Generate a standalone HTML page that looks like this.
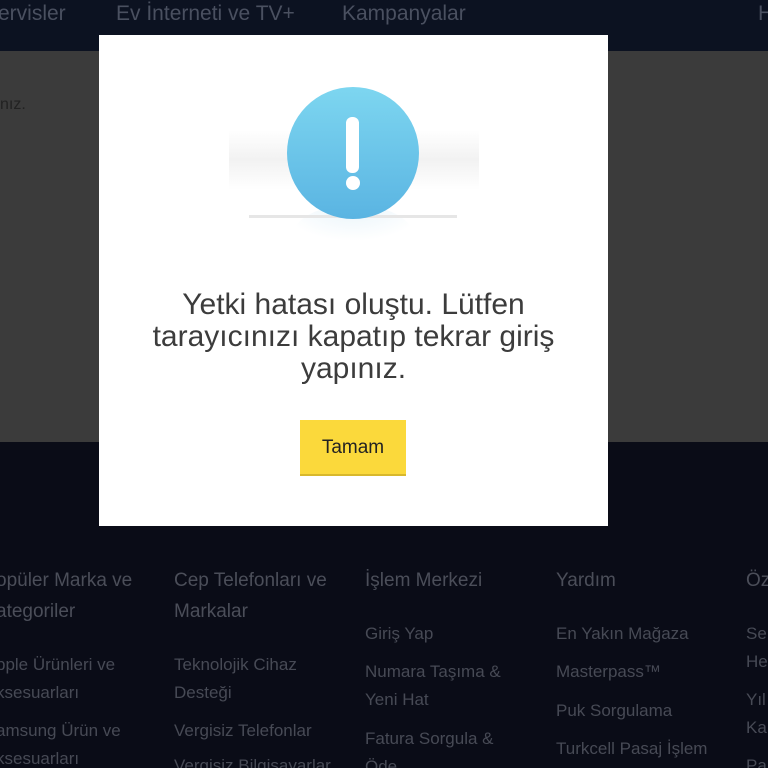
<!DOCTYPE html>
<html style="width:768px;height:768px;overflow:hidden"><head><style>
*{margin:0;padding:0;box-sizing:border-box}
body{width:768px;height:768px;overflow:hidden;position:relative;background:#0a0c17;font-family:"Liberation Sans",sans-serif}
.nav{position:absolute;left:0;top:0;width:768px;height:51px;background:#0c1221;color:#4a5060;font-size:21px}
.nav span{position:absolute;top:2px}
.gray{position:absolute;left:0;top:51px;width:768px;height:391px;background:#3b3b3b}
.foot{position:absolute;color:#474a55;font-size:17px;line-height:28px;white-space:nowrap}
.foot.h{font-size:19px;line-height:31px;color:#4b4e59}
.modal{position:absolute;left:99px;top:35px;width:509px;height:491px;background:#fff}
.msg{position:absolute;left:0;top:254px;width:509px;text-align:center;font-size:30px;line-height:32px;color:#3c3c3c}
.btn{position:absolute;left:201px;top:385px;width:106px;height:56px;background:#fbd93b;border-bottom:2px solid #d8b82c;font-size:19px;color:#222;text-align:center;line-height:56px}
</style></head><body>
<div class="nav"><span style="left:-2px">ervisler</span><span style="left:116px">Ev İnterneti ve TV+</span><span style="left:342px">Kampanyalar</span><span style="left:758px">H</span></div>
<div class="gray"><span style="position:absolute;left:0;top:45px;color:#222;font-size:16px">nız.</span></div>
<div class="foot h" style="left:-4px;top:565px">opüler Marka ve<br>ategoriler</div>
<div class="foot h" style="left:174px;top:565px">Cep Telefonları ve<br>Markalar</div>
<div class="foot h" style="left:365px;top:565px">İşlem Merkezi</div>
<div class="foot h" style="left:556px;top:565px">Yardım</div>
<div class="foot h" style="left:746px;top:565px">Öz</div>
<div class="foot" style="left:-4px;top:651px">pple Ürünleri ve<br>ksesuarları</div>
<div class="foot" style="left:-4px;top:717px">amsung Ürün ve<br>ksesuarları</div>
<div class="foot" style="left:174px;top:651px">Teknolojik Cihaz<br>Desteği</div>
<div class="foot" style="left:174px;top:717px">Vergisiz Telefonlar</div>
<div class="foot" style="left:174px;top:752px">Vergisiz Bilgisayarlar</div>
<div class="foot" style="left:365px;top:620px">Giriş Yap</div>
<div class="foot" style="left:365px;top:658px">Numara Taşıma &amp;<br>Yeni Hat</div>
<div class="foot" style="left:365px;top:725px">Fatura Sorgula &amp;<br>Öde</div>
<div class="foot" style="left:556px;top:620px">En Yakın Mağaza</div>
<div class="foot" style="left:556px;top:658px">Masterpass™</div>
<div class="foot" style="left:556px;top:697px">Puk Sorgulama</div>
<div class="foot" style="left:556px;top:735px">Turkcell Pasaj İşlem</div>
<div class="foot" style="left:746px;top:620px">Se<br>He</div>
<div class="foot" style="left:746px;top:686px">Yıl<br>Ka</div>
<div class="foot" style="left:746px;top:752px">Pa</div>
<div class="modal">
<svg width="509" height="240" style="position:absolute;left:0;top:0">
<defs>
<linearGradient id="g" x1="0" y1="0" x2="0" y2="1"><stop offset="0" stop-color="#7dd6f0"/><stop offset="1" stop-color="#5ab4e2"/></linearGradient>
<linearGradient id="s" x1="0" y1="0" x2="0" y2="1"><stop offset="0" stop-color="#fff"/><stop offset="0.5" stop-color="#f2f2f2"/><stop offset="1" stop-color="#fff"/></linearGradient>
<radialGradient id="r" cx="0.5" cy="0" r="0.6"><stop offset="0" stop-color="#e8f4fa"/><stop offset="1" stop-color="#fff"/></radialGradient>
</defs>
<rect x="130" y="95" width="250" height="60" fill="url(#s)"/>
<ellipse cx="254" cy="200" rx="60" ry="30" fill="url(#r)"/>
<rect x="150" y="180" width="208" height="3" fill="#e6e6e6"/>
<circle cx="254" cy="118" r="66" fill="url(#g)"/>
<rect x="247" y="82" width="13" height="56" rx="6" fill="#fff"/>
<circle cx="254" cy="148" r="7" fill="#fff"/>
</svg>
<div class="msg">Yetki hatası oluştu. Lütfen<br>tarayıcınızı kapatıp tekrar giriş<br>yapınız.</div>
<div class="btn">Tamam</div>
</div>
</body></html>
